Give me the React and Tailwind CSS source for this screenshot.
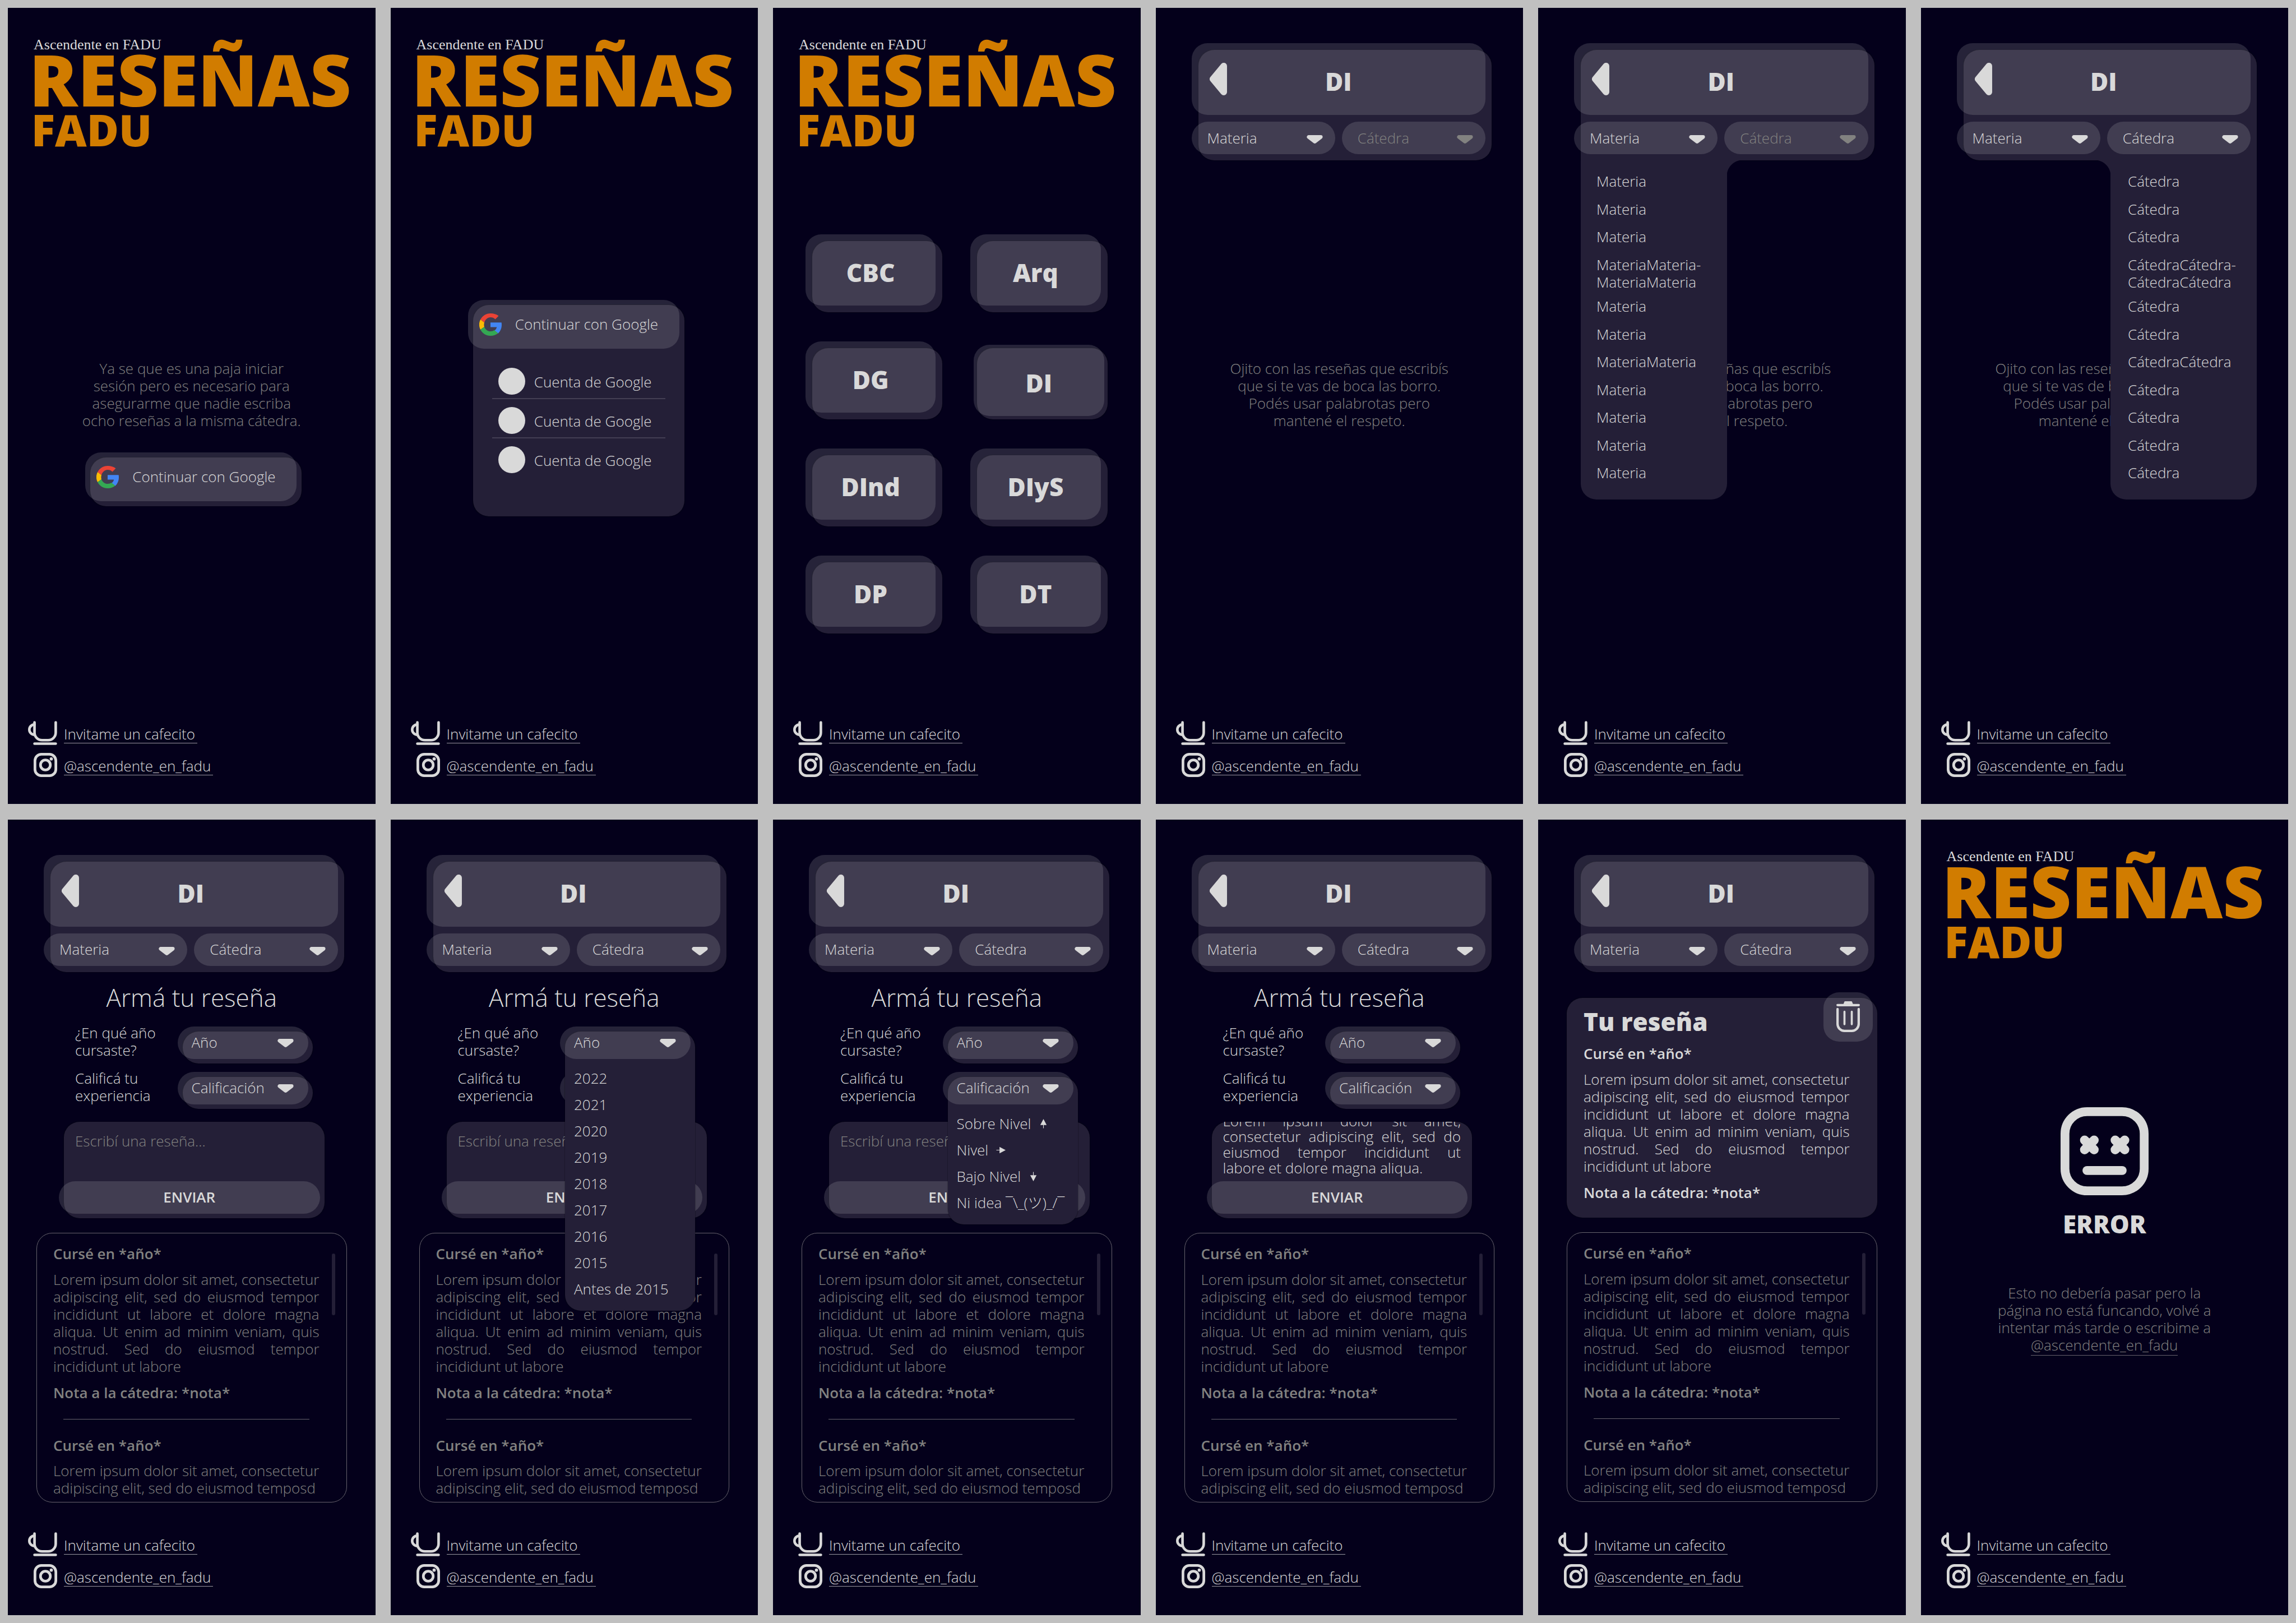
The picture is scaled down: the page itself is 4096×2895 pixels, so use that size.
import { useEffect, useRef } from "react";

const LOREM =
  "Lorem ipsum dolor sit amet, consectetur adipiscing elit, sed do eiusmod tempor incididunt ut labore et dolore magna aliqua. Ut enim ad minim veniam, quis nostrud. Sed do eiusmod tempor incididunt ut labore";
const DRAFT =
  "Lorem ipsum dolor sit amet, consectetur adipiscing elit, sed do eiusmod tempor incididunt ut labore et dolore magna aliqua.";
const YEARS = ["2022", "2021", "2020", "2019", "2018", "2017", "2016", "2015", "Antes de 2015"];

/* ---------- icons ---------- */

function GoogleIcon() {
  return (
    <svg viewBox="3 3 42 42" className="size-10 shrink-0" aria-hidden="true">
      <path fill="#EA4335" d="M24 10.4c3.5 0 6.6 1.2 9 3.5l6.2-6.2C35.4 4.6 30.1 3 24 3 15.800 3 8.700 7.700 5.200 14.600l7.300 5.600C14.200 14.500 18.600 10.400 24 10.400z" />
      <path fill="#4285F4" d="M45 24.500c0-1.600-.1-3-.4-4.500H24v8.700h11.800c-.5 2.700-2.100 5-4.400 6.500l6.800 5.300c4.300-3.900 6.800-9.700 6.800-16z" />
      <path fill="#FBBC05" d="M12.500 28.200a13 13 0 0 1 0-8L5.200 14.600a21 21 0 0 0 0 18.900z" />
      <path fill="#34A853" d="M24 45c5.700 0 10.500-1.800 14.200-5.100l-6.900-5.300c-1.900 1.300-4.400 2.100-7.300 2.100-5.400 0-9.900-3.600-11.500-8.500l-7.300 5.300C8.700 40.300 15.800 45 24 45z" />
    </svg>
  );
}

function Caret({ className = "" }) {
  return (
    <svg viewBox="0 0 30 16" className={"h-[15px] w-[29px] fill-current stroke-current " + className} aria-hidden="true">
      <path d="M3.500 3.500H26.500L15 12.400z" strokeWidth="7" strokeLinejoin="round" />
    </svg>
  );
}

function BackIcon() {
  return (
    <svg viewBox="0 0 32 60" className="h-[58px] w-[31px] fill-current stroke-current" aria-hidden="true">
      <path d="M26 6V54L6 30z" strokeWidth="12" strokeLinejoin="round" />
    </svg>
  );
}

function CupIcon() {
  return (
    <svg viewBox="0 0 54 44.500" className="h-[43px] w-[52px]" fill="none" stroke="currentColor" strokeWidth="4.800" strokeLinecap="round" aria-hidden="true">
      <path d="M12 2.500V21.500A14 14 0 0 0 26 35.500H37.300A14 14 0 0 0 51.300 21.500V2.500" />
      <path d="M12 6.500A9.600 9.500 0 0 0 12 25.500" />
      <path d="M12 42H51.300" />
    </svg>
  );
}

function InstagramIcon() {
  return (
    <svg viewBox="0 0 44 45" className="h-[43px] w-[42px]" fill="none" stroke="currentColor" strokeWidth="5" aria-hidden="true">
      <rect x="2.500" y="2.500" width="39" height="40" rx="12" />
      <circle cx="22" cy="22.500" r="9.200" />
      <circle cx="33" cy="11.200" r="3" fill="currentColor" stroke="none" />
    </svg>
  );
}

function TrashIcon() {
  return (
    <svg viewBox="0 0 43.500 57" className="h-[55px] w-[42px]" fill="none" stroke="currentColor" strokeLinecap="round" aria-hidden="true">
      <path d="M13 5.500L14.600 1.200Q15 0 16.300 0H27.500Q28.800 0 29.200 1.200L30.800 5.500z" fill="currentColor" stroke="none" />
      <path d="M2.200 7H41.300" strokeWidth="4.400" />
      <path d="M2.200 14.500V42A12.800 12.800 0 0 0 15 54.800H28.500A12.800 12.800 0 0 0 41.300 42V14.500" strokeWidth="4.400" />
      <path d="M15 19.200V42.400M28.500 19.200V42.400" strokeWidth="3.800" />
    </svg>
  );
}

function DeadFaceIcon() {
  return (
    <svg viewBox="0 0 163 163" className="size-[157px]" fill="none" stroke="currentColor" strokeLinecap="round" aria-hidden="true">
      <rect x="8.150" y="8.150" width="146.700" height="146.700" rx="41" strokeWidth="16.300" />
      <path d="M44.500 61L62.100 78.600M62.100 61L44.500 78.600M101.200 61L118.800 78.600M118.800 61L101.200 78.600" strokeWidth="17" />
      <path d="M48.800 117.200H114.200" strokeWidth="16.300" />
    </svg>
  );
}

function Arrow({ direction }) {
  const turn = { up: "", right: "rotate-90", down: "rotate-180" }[direction];
  return (
    <svg viewBox="0 0 18 18" className={"size-[17px] " + turn} aria-hidden="true">
      <path d="M9 0L15 11.500H3z" fill="currentColor" />
      <path d="M9 11V17.500" stroke="currentColor" strokeWidth="1.200" />
    </svg>
  );
}

/* ---------- shared parts ---------- */

function Screen({ children }) {
  return (
    <main className="flex min-w-0 flex-col bg-[#04001b] pb-12">
      {children}
      <footer className="mt-auto flex flex-col gap-3.5 pl-9">
        <FooterLink icon={<CupIcon />}>Invitame un cafecito</FooterLink>
        <FooterLink icon={<InstagramIcon />}>@ascendente_en_fadu</FooterLink>
      </footer>
    </main>
  );
}

function FooterLink({ icon, children }) {
  return (
    <div className="flex h-[43px] items-end gap-3">
      <span className="flex w-[52px] justify-end">{icon}</span>
      <a href="#" className="mb-[3px] border-b border-[#9a98a0] pr-1 leading-8">
        {children}
      </a>
    </div>
  );
}

function Logo() {
  return (
    <header className="flex flex-col pt-[53px] pl-[46px]">
      <p className="font-['Liberation_Serif',serif] text-[26px] leading-[26px]">Ascendente en FADU</p>
      <h1 className="flex flex-col font-extrabold text-[#d17c00]">
        <span className="-ml-2 text-[128px] leading-[96px]">RESEÑAS</span>
        <span className="-ml-1 text-[78px] leading-[84px]">FADU</span>
      </h1>
    </header>
  );
}

function Note({ children, className = "" }) {
  return <p className={"text-center leading-[31px] text-[#828280] " + className}>{children}</p>;
}

function GoogleButton() {
  return (
    <button type="button" className="-mt-[9px] mr-[9px] -ml-[9px] flex h-[87px] items-center gap-6 rounded-[28px] bg-[#d9d9d9]/16 pl-5">
      <GoogleIcon />
      Continuar con Google
    </button>
  );
}

function Option({ label, isLong }) {
  return (
    <li role="option" aria-selected="false" className={isLong ? "h-14" : ""}>
      {isLong ? (
        <>
          {label + label}-<br />
          {label + label}
        </>
      ) : (
        label
      )}
    </li>
  );
}

function Picker({ label, disabled }) {
  return (
    <div className={"relative h-[58px] flex-1 rounded-full bg-[#d9d9d9]/16 " + (disabled ? "text-[#828280]" : "")}>
      <select aria-label={label} disabled={disabled} className="size-full appearance-none bg-transparent pl-7 opacity-100">
        <option>{label}</option>
      </select>
      <Caret className="pointer-events-none absolute top-6 right-[22px]" />
    </div>
  );
}

function SubjectHeader({ chairDisabled = false, open = "" }) {
  const corners =
    open === "Materia" ? "rounded-t-[28px] rounded-br-[28px]" : open === "Cátedra" ? "rounded-t-[28px] rounded-bl-[28px]" : "rounded-[28px]";
  return (
    <header className={"relative z-10 mt-[75px] mr-[56px] ml-[76px] flex flex-col bg-[#241f37] pb-[11px] shadow-[0_0_2px_#000000b0] " + corners}>
      {open && (
        <div className={"absolute top-full flex w-[261px] flex-col rounded-b-[28px] bg-[#241f37] pt-[22px] pb-[32px] " + (open === "Materia" ? "left-0 pl-7" : "right-0 pl-[31px]")}>
          <span
            className={
              "absolute top-0 size-7 " +
              (open === "Materia"
                ? "left-full bg-[radial-gradient(circle_at_100%_100%,transparent_28px,#241f37_29px)]"
                : "right-full bg-[radial-gradient(circle_at_0%_100%,transparent_28px,#241f37_29px)]")
            }
          />
          <ul role="listbox" aria-label={open} className="flex h-[551px] flex-col justify-between leading-[31px]">
            <Option label={open} />
            <Option label={open} />
            <Option label={open} />
            <Option label={open} isLong />
            <Option label={open} />
            <Option label={open} />
            <Option label={open + open} />
            <Option label={open} />
            <Option label={open} />
            <Option label={open} />
            <Option label={open} />
          </ul>
        </div>
      )}
      <div className="relative -mt-3 mr-[11px] -ml-3 flex flex-col gap-3">
        <div className="relative flex h-[128px] items-center rounded-[28px] bg-[#d9d9d9]/16">
          <button type="button" aria-label="Volver" className="absolute left-8">
            <BackIcon />
          </button>
          <h2 className="flex-1 pt-2 text-center text-[44px] leading-[60px] font-extrabold">DI</h2>
        </div>
        <div className="flex gap-3">
          <Picker label="Materia" />
          <Picker label="Cátedra" disabled={chairDisabled} />
        </div>
      </div>
    </header>
  );
}

function FormSelect({ id, label, children }) {
  const open = Boolean(children);
  return (
    <div className="relative mt-[13px] h-[57px] w-[232px]">
      <div className={"absolute inset-x-0 top-0 flex flex-col rounded-[28px] bg-[#241f37] shadow-[0_0_2px_#000000b0] " + (open ? "z-20" : "")}>
        <div className="relative -mt-[9px] mr-2 mb-2 -ml-[9px] h-[58px] rounded-full bg-[#d9d9d9]/16">
          <select id={id} className="size-full appearance-none bg-transparent pl-[25px]">
            <option>{label}</option>
          </select>
          <Caret className="pointer-events-none absolute top-[22px] right-[26px]" />
        </div>
        {open && (
          <ul role="listbox" aria-label={label} className="flex flex-col gap-4 pt-[11px] pb-[23px] pl-4 leading-[31px] whitespace-nowrap">
            {children}
          </ul>
        )}
      </div>
    </div>
  );
}

function RatingOption({ children, arrow }) {
  return (
    <li role="option" aria-selected="false" className="flex items-center gap-3.5">
      {children}
      {arrow && <Arrow direction={arrow} />}
    </li>
  );
}

function ReviewForm({ id, open = "", draft = "" }) {
  const box = useRef(null);
  useEffect(() => {
    box.current.scrollTop = box.current.scrollHeight;
  }, []);
  return (
    <form className="mt-[21px] flex flex-col">
      <h3 className="text-center text-[44px] leading-[48px]">Armá tu reseña</h3>
      <div className="mt-6 flex flex-col gap-[11px] pr-[112px] pl-[120px] leading-[31px]">
        <div className="flex justify-between">
          <label htmlFor={id + "-year"}>
            ¿En qué año
            <br />
            cursaste?
          </label>
          <FormSelect id={id + "-year"} label="Año">
            {open === "year" &&
              YEARS.map((year) => (
                <li key={year} role="option" aria-selected="false">
                  {year}
                </li>
              ))}
          </FormSelect>
        </div>
        <div className="flex justify-between">
          <label htmlFor={id + "-rating"}>
            Calificá tu
            <br />
            experiencia
          </label>
          <FormSelect id={id + "-rating"} label="Calificación">
            {open === "rating" && (
              <>
                <RatingOption arrow="up">Sobre Nivel</RatingOption>
                <RatingOption arrow="right">Nivel</RatingOption>
                <RatingOption arrow="down">Bajo Nivel</RatingOption>
                <RatingOption>Ni idea ¯\_(ツ)_/¯</RatingOption>
              </>
            )}
          </FormSelect>
        </div>
      </div>
      <div className="mt-[23px] mr-[91px] ml-[100px] flex flex-col rounded-[28px] bg-[#241f37] pb-2 shadow-[0_0_2px_#000000b0]">
        <textarea
          ref={box}
          aria-label="Reseña"
          placeholder="Escribí una reseña..."
          defaultValue={draft}
          className="h-[106px] resize-none overflow-hidden bg-transparent px-5 pt-5 pb-2.5 text-justify leading-7 outline-none placeholder:text-[#828280]"
        />
        <button type="submit" className="mr-2 -ml-[9px] h-[58px] rounded-full bg-[#d9d9d9]/16 font-semibold">
          ENVIAR
        </button>
      </div>
    </form>
  );
}

function Reviews() {
  return (
    <section className="relative mt-[26px] mr-[51px] ml-[51px] flex h-[481px] flex-col overflow-hidden rounded-[28px] border border-[#67646d] pt-[21px] pr-[48px] pl-[29px] leading-[31px] text-[#828280]">
      <span className="absolute top-9 right-5 h-[110px] w-1.5 rounded-full bg-[#241f37]" />
      <h4 className="font-semibold">Cursé en *año*</h4>
      <p className="mt-[15px] text-justify">{LOREM}</p>
      <p className="mt-4 font-semibold">Nota a la cátedra: *nota*</p>
      <hr className="mx-[18px] my-[31px] border-t border-[#67646d]" />
      <h4 className="font-semibold">Cursé en *año*</h4>
      <p className="mt-3.5 whitespace-nowrap">
        Lorem ipsum dolor sit amet, consectetur
        <br />
        adipiscing elit, sed do eiusmod temposd
      </p>
    </section>
  );
}

function OwnReview() {
  return (
    <section className="relative mt-[46px] mr-[51px] ml-[51px] flex flex-col rounded-[28px] bg-[#241f37] pt-[18px] pr-[49px] pb-[29px] pl-[30px] leading-[31px] shadow-[0_0_2px_#000000b0]">
      <button type="button" aria-label="Eliminar reseña" className="absolute -top-2.5 right-2 flex size-[88px] items-center justify-center rounded-[28px] bg-[#d9d9d9]/16">
        <TrashIcon />
      </button>
      <h3 className="text-[44px] leading-[48px] font-extrabold">Tu reseña</h3>
      <h4 className="mt-[18px] font-semibold">Cursé en *año*</h4>
      <p className="mt-[15px] text-justify">{LOREM}</p>
      <p className="mt-4 font-semibold">Nota a la cátedra: *nota*</p>
    </section>
  );
}

/* ---------- screens ---------- */

function LoginScreen() {
  return (
    <Screen>
      <Logo />
      <Note className="mt-[369px]">
        Ya se que es una paja iniciar
        <br />
        sesión pero es necesario para
        <br />
        asegurarme que nadie escriba
        <br />
        ocho reseñas a la misma cátedra.
      </Note>
      <div className="mx-auto mt-[50px] flex w-[377px] translate-x-2 flex-col rounded-[28px] bg-[#241f37] pb-[9px] shadow-[0_0_2px_#000000b0]">
        <GoogleButton />
      </div>
    </Screen>
  );
}

function AccountsScreen() {
  return (
    <Screen>
      <Logo />
      <div className="mx-auto mt-[271px] flex w-[377px] translate-x-2 flex-col rounded-[28px] bg-[#241f37] pb-[69px] shadow-[0_0_2px_#000000b0]">
        <GoogleButton />
        <ul className="mx-[34px] mt-5 flex flex-col">
          {[1, 2, 3].map((n) => (
            <li key={n} className="border-b-2 border-[#433e53] pt-3.5 pb-1.5 pl-[11px] last:border-transparent">
              <button type="button" className="flex h-12 items-center gap-4">
                <span className="size-12 rounded-full bg-[#d9d9d9]" />
                <span className="pt-0.5">Cuenta de Google</span>
              </button>
            </li>
          ))}
        </ul>
      </div>
    </Screen>
  );
}

function CareersScreen() {
  return (
    <Screen>
      <Logo />
      <nav className="mt-[157px] grid grid-cols-2 gap-x-[62px] gap-y-16 pr-[59px] pl-[70px] text-[44px] font-extrabold">
        {["CBC", "Arq", "DG", "DI", "DInd", "DIyS", "DP", "DT"].map((name) => (
          <div key={name} className="flex h-[127px] flex-col rounded-[28px] bg-[#241f37] shadow-[0_0_2px_#000000b0]">
            <button
              type="button"
              className={"h-[127px] shrink-0 rounded-[28px] bg-[#d9d9d9]/16 pt-2 " + (name === "DI" ? "-mt-1.5 mr-1.5 -ml-1.5" : "-mt-3 mr-3 -ml-3")}
            >
              {name}
            </button>
          </div>
        ))}
      </nav>
    </Screen>
  );
}

function SubjectScreen(props) {
  return (
    <Screen>
      <SubjectHeader {...props} />
      <Note className="mt-[356px]">
        Ojito con las reseñas que escribís
        <br />
        que si te vas de boca las borro.
        <br />
        Podés usar palabrotas pero
        <br />
        mantené el respeto.
      </Note>
    </Screen>
  );
}

function ReviewScreen(props) {
  return (
    <Screen>
      <SubjectHeader />
      <ReviewForm {...props} />
      <Reviews />
    </Screen>
  );
}

function OwnReviewScreen() {
  return (
    <Screen>
      <SubjectHeader />
      <OwnReview />
      <Reviews />
    </Screen>
  );
}

function ErrorScreen() {
  return (
    <Screen>
      <Logo />
      <div className="mt-[254px] flex flex-col items-center">
        <DeadFaceIcon />
        <h2 className="mt-[27px] text-[44px] leading-[48px] font-extrabold">ERROR</h2>
        <Note className="mt-[84px]">
          Esto no debería pasar pero la
          <br />
          página no está funcando, volvé a
          <br />
          intentar más tarde o escribime a
          <br />
          <a href="#" className="border-b border-[#67646d]">
            @ascendente_en_fadu
          </a>
        </Note>
      </div>
    </Screen>
  );
}

export default function App() {
  return (
    <div className="grid min-h-screen auto-rows-fr grid-cols-6 gap-x-[27px] gap-y-7 bg-[#c0c0c0] p-3.5 font-['Open_Sans','Noto_Sans_CJK_JP',sans-serif] text-[26px] font-light text-[#d9d9d9]">
      <LoginScreen />
      <AccountsScreen />
      <CareersScreen />
      <SubjectScreen chairDisabled />
      <SubjectScreen chairDisabled open="Materia" />
      <SubjectScreen open="Cátedra" />
      <ReviewScreen id="empty" />
      <ReviewScreen id="years" open="year" />
      <ReviewScreen id="ratings" open="rating" />
      <ReviewScreen id="draft" draft={DRAFT} />
      <OwnReviewScreen />
      <ErrorScreen />
    </div>
  );
}
